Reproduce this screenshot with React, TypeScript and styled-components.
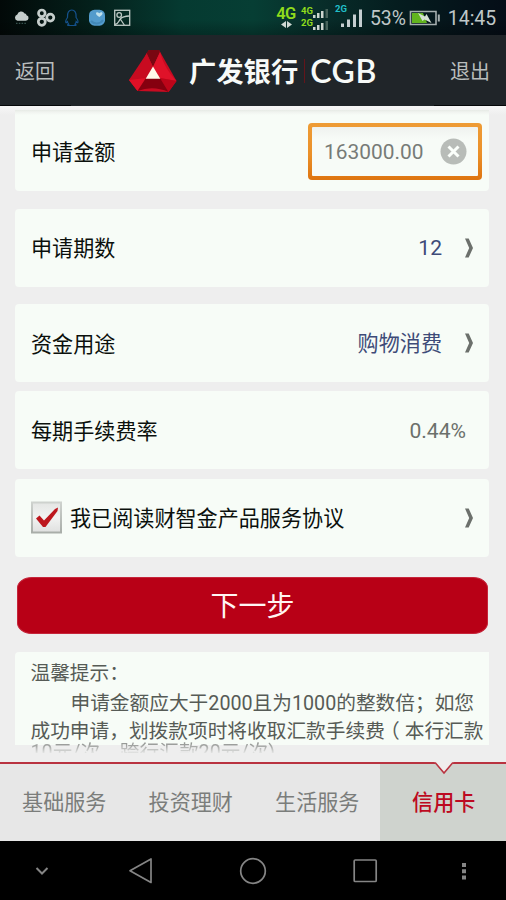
import React from "react";
import styled, { createGlobalStyle } from "styled-components";

const GlobalStyle = createGlobalStyle`
  * { box-sizing: border-box; }
  body { margin: 0; background: #eeeeee; font-family: Roboto, "Noto Sans CJK SC", sans-serif; }
`;

const Screen = styled.div`
  width: 506px;
  height: 900px;
  display: flex;
  flex-direction: column;
  overflow: hidden;
  background: #eeeeee;
  white-space: nowrap;
`;

const StatusBar = styled.div`
  height: 35px;
  flex: none;
  display: flex;
  align-items: center;
  padding-left: 13px;
  background:
    linear-gradient(180deg, transparent 55%, rgba(0, 0, 0, 0.25)),
    linear-gradient(90deg, #020908 0%, #04201b 18%, #053a31 36%, #063e34 50%, #082f2b 62%, #051d1f 78%, #050d17 100%);
`;

const StatusIcons = styled.svg`
  flex: none;
  display: block;
`;

const DataType = styled.div`
  display: flex;
  flex-direction: column;
  align-items: center;
  width: 20px;
  margin-left: 143px;
  color: #8fdc1c;
  font-size: 16.5px;
  font-weight: 600;
  letter-spacing: -0.6px;
  line-height: 14px;
`;

const DualSignal = styled.div`
  display: flex;
  flex-direction: column;
  margin-left: 5px;
  width: 29px;
`;

const SignalLine = styled.div`
  display: flex;
  align-items: flex-end;
  height: 12px;
  color: #8fdc1c;
  font-size: 9.5px;
  font-weight: 700;
  line-height: 14px;
`;

const MainSignal = styled.div`
  display: flex;
  margin-left: 5px;
  width: 30px;
  height: 24px;
  color: #21bfc9;
  font-size: 9.5px;
  font-weight: 700;
  line-height: 6px;
`;

const MainBars = styled.svg`
  margin-left: -8px;
  flex: none;
`;

const StatusText = styled.span<{ $gap: number; $spacing?: number }>`
  margin-left: ${(p) => p.$gap}px;
  color: #bfc7c8;
  font-size: 19.4px;
  letter-spacing: ${(p) => p.$spacing ?? 0}px;
  line-height: 22px;
  padding-top: 2px;
`;

const Battery = styled.svg`
  flex: none;
  margin-left: 3px;
`;

const Header = styled.header`
  height: 71px;
  flex: none;
  display: flex;
  align-items: center;
  padding: 1px 16px 0 15px;
  background:
    linear-gradient(#05080a, #05080a) left bottom / 71px 1px no-repeat,
    linear-gradient(#05080a, #05080a) right bottom / 72px 1px no-repeat,
    #202529;
`;

const HeaderLink = styled.button`
  border: 0;
  padding: 2px 0 0;
  background: none;
  color: #b9bdbd;
  font: 20px/28px Roboto, "Noto Sans CJK SC", sans-serif;
`;

const Brand = styled.div`
  flex: 1;
  display: flex;
  align-items: center;
  padding-left: 74px;
`;

const BankName = styled.span`
  margin-left: 12px;
  padding-bottom: 2px;
  color: #f7faf8;
  font: 700 27.3px/40px "Noto Sans CJK SC", sans-serif;
`;

const Divider = styled.i`
  width: 1px;
  height: 24px;
  margin-left: 6px;
  background: #64151b;
`;

const BankCode = styled.span`
  margin-left: 5px;
  color: #f7faf8;
  font: 600 32px/40px Lato, sans-serif;
  letter-spacing: 0.6px;
`;

const Content = styled.main`
  height: 657px;
  flex: none;
  overflow: hidden;
  padding: 4px 17px 0 15px;
  background: linear-gradient(#f6f6f6 0, #f3f3f3 4px, #eeeeee 9px);
`;

const Card = styled.section<{ $top?: number; $height?: number; $first?: boolean }>`
  height: ${(p) => p.$height ?? 78}px;
  margin-top: ${(p) => p.$top ?? 0}px;
  display: flex;
  align-items: center;
  padding: ${(p) => (p.$first ? 2 : 0)}px 0 0 16px;
  border-radius: ${(p) => (p.$first ? "0 0 4px 4px" : "4px")};
  background: ${(p) => (p.$first ? "linear-gradient(#e6eae5 0, #f0f3ef 2px, #f7fcf7 5px)" : "#f7fcf7")};
`;

const Label = styled.span<{ $drop?: number }>`
  flex: 1;
  padding-top: ${(p) => p.$drop ?? 2}px;
  color: #0b100c;
  font-size: 21.1px;
  line-height: 30px;
`;

const Value = styled.span<{ $muted?: boolean; $right: number; $drop?: number }>`
  margin-right: ${(p) => p.$right}px;
  padding-top: ${(p) => p.$drop ?? 2}px;
  color: ${(p) => (p.$muted ? "#6b706b" : "#3e4b78")};
  font-size: 21.1px;
  line-height: 30px;
`;

const Chevron = styled.svg`
  flex: none;
  margin-right: 15px;
`;

const AmountBox = styled.div`
  width: 174px;
  height: 57px;
  margin-right: 7px;
  padding: 4px;
  border-radius: 4px;
  background: linear-gradient(#ee9c35, #eb9029 55%, #de7410);
`;

const AmountField = styled.div`
  height: 49px;
  display: flex;
  align-items: center;
  justify-content: space-between;
  padding: 0 11px 0 12px;
  border-radius: 1px;
  background: linear-gradient(#eff2ef, #f7fbf7 12px);
  color: #777b77;
  font-size: 20.9px;
`;

const CheckIcon = styled.svg`
  flex: none;
  margin-right: 8px;
`;

const NextButton = styled.button`
  display: block;
  width: 471px;
  height: 57px;
  margin: 20px 0 0 2px;
  padding: 0 0 2px;
  border: 1px solid #c5253a;
  border-radius: 15px / 11px;
  background: #b80016;
  color: #fff5f3;
  font: 400 28px/53px "Noto Sans CJK SC", sans-serif;
`;

const TipArea = styled.section`
  height: 101px;
  margin-top: 18px;
  margin-right: -8px;
  overflow: hidden;
  padding: 9px 0 0 15.5px;
  background: linear-gradient(#f7fcf7, #f7fcf7) left top / 474px 93px no-repeat;
  border-radius: 4px;
  color: #565b56;
  font-size: 19.7px;
`;

const TipLine = styled.div<{ $height?: number; $indent?: boolean; $faded?: boolean }>`
  height: ${(p) => p.$height ?? 26}px;
  line-height: ${(p) => p.$height ?? 26}px;
  padding-left: ${(p) => (p.$indent ? 40 : 0)}px;
  ${(p) => p.$faded && "color: transparent; background: linear-gradient(#777b77 0, #a5a7a5 8px, #e3e4e3 15px); background-clip: text;"}
`;

const Paren = styled.span`
  padding: 0 5px;
  font-family: "Noto Sans CJK SC", sans-serif;
  font-feature-settings: "halt";
`;

const Tabs = styled.nav`
  position: relative;
  height: 79px;
  flex: none;
  display: grid;
  grid-template-columns: repeat(4, 1fr);
  margin-top: -1px;
  border-top: 2px solid #b93340;
`;

const Tab = styled.button<{ $active?: boolean }>`
  border: 0;
  padding: 1px 0 0 2px;
  background: ${(p) => (p.$active ? "#cfd3ce" : "#e7e7e7")};
  color: ${(p) => (p.$active ? "#bd0a21" : "#7b7d7b")};
  font: ${(p) => (p.$active ? 500 : 400)} 21.1px/30px Roboto, "Noto Sans CJK SC", sans-serif;
`;

const Notch = styled.svg`
  position: absolute;
  left: 434px;
  top: -2px;
`;

const NavBar = styled.footer`
  flex: 1;
  display: flex;
  background: #000;
`;

const rows = [
  { label: "申请期数", value: "12", drop: 0 },
  { label: "资金用途", value: "购物消费", drop: 2 },
];

function Arrow() {
  return (
    <Chevron width="10" height="22" viewBox="0 0 10 22">
      <path d="M1 1.5H4.7L9 11L4.7 20.5H1L5.2 11Z" fill="#6c706c" />
    </Chevron>
  );
}

function NotificationIcons() {
  return (
    <StatusIcons width="120" height="26" viewBox="13 4 120 26">
      <path d="M17.5 19.8a3.2 3.2 0 0 1-.2-6.2a4 4 0 0 1 7.3-1.2c1.8.2 2 1.6 1.9 1.9a2.8 2.8 0 0 1-.6 5.5Z" fill="#c5cdcc" />
      <path d="M16 22.3H26" stroke="#45655f" strokeDasharray="1.5 1.3" />
      <g fill="none" stroke="#c6cecc" strokeWidth="2.7">
        <circle cx="41.8" cy="12.3" r="3.3" />
        <circle cx="41.8" cy="20.8" r="3.5" />
        <circle cx="50.3" cy="16.6" r="3.5" />
      </g>
      <path d="M67.5 16.5C67 11.5 69 9 71.8 9s4.8 2.5 4.3 7.5c1.4 2 2.6 4 1.6 5.2-.7.3-1-.8-1.5-1.2-.2 1.5-.8 2-1.2 2.6 1.3.3 1.4 1.2.4 1.4H68.3c-1-.2-.9-1.1.4-1.4-.5-.6-1-1.1-1.2-2.6-.6.4-.8 1.5-1.5 1.2-.9-1.2.1-3.2 1.5-5.2Z" fill="none" stroke="#14508b" strokeWidth="1.2" />
      <rect x="89" y="8.7" width="16" height="16" rx="5.5" fill="#539bcc" />
      <path d="M91 20c3 3.5 9 3.5 12-1" fill="none" stroke="#4288b8" strokeWidth="2" />
      <path d="M99.3 16c-5.5-3-3-6.2 0-3.8 3-2.4 5.5.8 0 3.8Z" fill="#c0e1ec" />
      <g fill="none" stroke="#bdc9c5" strokeWidth="1.3">
        <rect x="114.7" y="9.3" width="15" height="15" />
        <circle cx="119.2" cy="14" r="2.3" />
        <path d="M115 23.5c4-1 3.5-3.5 5.5-5.8 2-2.3 4-2.5 9-2.7M120.3 18l4 6" />
      </g>
    </StatusIcons>
  );
}

function SmallBars() {
  return (
    <svg width="16" height="11" viewBox="0 0 16 11">
      <path d="M0 8h2.5v3H0zM4 6h2.5v5H4zM8 4h2.5v7H8z" fill="#ccd5cf" />
      <path d="M12.5 2h2.5v9h-2.5z" fill="#46635b" />
    </svg>
  );
}

function Logo() {
  return (
    <svg width="48" height="43" viewBox="0 0 48 43">
      <path d="M20 0H30L47.5 31L39.5 42L8.5 41L0 30Z" fill="#c80b21" />
      <path d="M20 0H30L31 2L24 17L17.5 3Z" fill="#790711" />
      <path d="M17.5 3L24 17L16 28L0 30C9 22 14 12 17.5 3Z" fill="#c80b20" />
      <path d="M31 2C34 13 39 22 47.5 31L31 28L24 17Z" fill="#e01229" />
      <path d="M0 30L17 28L8.5 41Z" fill="#df1026" />
      <path d="M47.5 31L31 28L39.5 42Z" fill="#bd0519" />
      <path d="M17 28H31L39.5 42Q24 35 8.5 41Z" fill="#85000f" />
      <path d="M24 16.5L31.3 28.7H16.7Z" fill="#fff8e9" />
    </svg>
  );
}

export default function App() {
  return (
    <>
      <GlobalStyle />
      <Screen>
        <StatusBar>
          <NotificationIcons />
          <DataType>
            4G
            <svg width="11" height="7" viewBox="0 0 11 7">
              <path d="M5 0V7L0 3.5ZM6 0V7L11 3.5Z" fill="#cfd9d4" />
            </svg>
          </DataType>
          <DualSignal>
            <SignalLine>4G<SmallBars /></SignalLine>
            <SignalLine>2G<SmallBars /></SignalLine>
          </DualSignal>
          <MainSignal>
            2G
            <MainBars width="24" height="24" viewBox="0 0 24 24">
              <path d="M2 17.5h3v3.5H2zM8 13.5h3v7.5H8zM14 8.5h3v12.5h-3zM20 3.5h3v17.5h-3z" fill="#c5ced0" />
            </MainBars>
          </MainSignal>
          <StatusText $gap={5} $spacing={-0.05}>53%</StatusText>
          <Battery width="32" height="16" viewBox="0 0 32 16">
            <path d="M1.5 1.5H27V14.5H1.5Z" fill="none" stroke="#a6afb0" strokeWidth="1.6" />
            <path d="M3 3H14L18 13H3Z" fill="#62b51f" />
            <path d="M9 3L16 6.5L17.5 4L22.5 13L15.5 9.5L13.5 11Z" fill="#d6e1d6" />
            <path d="M29.8 4.5V11.5" stroke="#a6afb0" strokeWidth="2" />
          </Battery>
          <StatusText $gap={7}>14:45</StatusText>
        </StatusBar>
        <Header>
          <HeaderLink>返回</HeaderLink>
          <Brand>
            <Logo />
            <BankName>广发银行</BankName>
            <Divider />
            <BankCode>CGB</BankCode>
          </Brand>
          <HeaderLink>退出</HeaderLink>
        </Header>
        <Content>
          <Card $first $height={81}>
            <Label>申请金额</Label>
            <AmountBox>
              <AmountField>
                163000.00
                <svg width="27" height="27" viewBox="0 0 27 27">
                  <circle cx="13.5" cy="13.5" r="13" fill="#b8bcb8" />
                  <path d="M8.5 8.5L18.5 18.5M18.5 8.5L8.5 18.5" stroke="#fbfffb" strokeWidth="3" />
                </svg>
              </AmountField>
            </AmountBox>
          </Card>
          {rows.map((row) => (
            <Card key={row.label} $top={17.7}>
              <Label $drop={3}>{row.label}</Label>
              <Value $right={22} $drop={row.drop}>{row.value}</Value>
              <Arrow />
            </Card>
          ))}
          <Card $top={9}>
            <Label $drop={3}>每期手续费率</Label>
            <Value $muted $right={23}>0.44%</Value>
          </Card>
          <Card $top={9.5}>
            <CheckIcon width="31" height="33" viewBox="0 0 31 33">
              <defs>
                <linearGradient id="box" x1="0" y1="0" x2="0" y2="1">
                  <stop offset="0" stopColor="#e4e6e4" />
                  <stop offset=".5" stopColor="#f2f3f2" />
                  <stop offset="1" stopColor="#dfe0df" />
                </linearGradient>
                <linearGradient id="edge" x1="0" y1="0" x2="0" y2="1">
                  <stop offset="0" stopColor="#ced2ce" />
                  <stop offset="1" stopColor="#a9aea9" />
                </linearGradient>
              </defs>
              <rect x="1" y="1.5" width="29" height="30" fill="url(#box)" stroke="url(#edge)" strokeWidth="2" />
              <path d="M5 17.5L8.5 14.5L13 19.5L24 8L27 6.5L26.5 10L14.5 26H12Z" fill="#bd171e" />
            </CheckIcon>
            <Label $drop={2}>我已阅读财智金产品服务协议</Label>
            <Arrow />
          </Card>
          <NextButton>下一步</NextButton>
          <TipArea>
            <TipLine>温馨提示：</TipLine>
            <TipLine $height={34} $indent>申请金额应大于2000且为1000的整数倍；如您</TipLine>
            <TipLine $height={17}>成功申请，划拨款项时将收取汇款手续费<Paren>（</Paren>本行汇款</TipLine>
            <TipLine $faded $height={30}>10元/次，跨行汇款20元/次)</TipLine>
          </TipArea>
        </Content>
        <Tabs>
          <Tab>基础服务</Tab>
          <Tab>投资理财</Tab>
          <Tab>生活服务</Tab>
          <Tab $active>信用卡</Tab>
          <Notch width="20" height="13" viewBox="0 0 20 13">
            <path d="M0 0H20L10 11Z" fill="#f0eded" />
            <path d="M0 1H1.5L10 11L18.5 1H20" fill="none" stroke="#b93340" strokeWidth="1.6" />
          </Notch>
        </Tabs>
        <NavBar>
          <svg width="506" height="59" viewBox="0 841 506 59" fill="none" stroke="#858585" strokeWidth="1.7">
            <path d="M36.5 868L42 873.5L47.5 868" strokeWidth="2" />
            <path d="M151 859V882.5L130 870.7Z" strokeLinejoin="round" />
            <circle cx="253" cy="871" r="12.3" />
            <rect x="354.2" y="860" width="22" height="21.5" rx="1" />
            <path d="M462 863h4v4h-4zM462 869.3h4v4h-4zM462 875.5h4v4h-4z" fill="#858585" stroke="none" />
          </svg>
        </NavBar>
      </Screen>
    </>
  );
}
